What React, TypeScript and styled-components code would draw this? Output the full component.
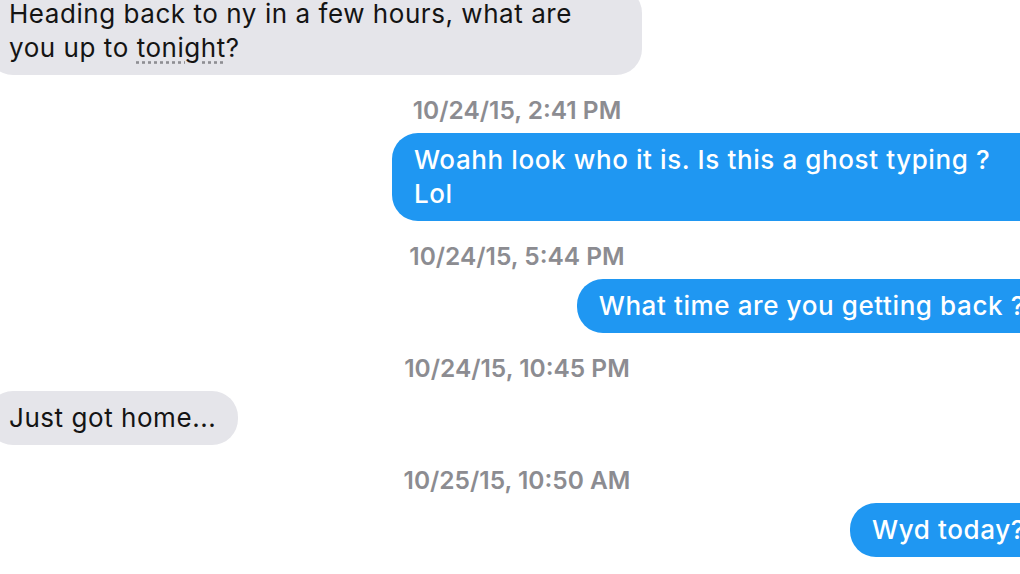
import React from "react";
import styled, { createGlobalStyle } from "styled-components";

type Message = {
   id: number;
   from: "me" | "them";
   stamp?: string;
   text: React.ReactNode;
};

const GlobalStyle = createGlobalStyle`
   html, body {
      margin: 0;
      padding: 0;
      background: #ffffff;
      overflow: hidden;
   }
   body {
      font-family: Inter, "Liberation Sans", Arial, sans-serif;
      -webkit-font-smoothing: antialiased;
   }
`;

const Thread = styled.div`
   display: flex;
   flex-direction: column;
   width: 1060px;
   margin-left: -13px;
   margin-top: -13px;
`;

const Stamp = styled.div`
   align-self: center;
   margin: 20px 0 8px;
   font-size: 24.5px;
   line-height: 30px;
   font-weight: 600;
   color: #8c8c91;
   white-space: nowrap;
`;

const Bubble = styled.div<{ $from: "me" | "them" }>`
   align-self: ${({ $from }) => ($from === "me" ? "flex-end" : "flex-start")};
   max-width: 655px;
   box-sizing: border-box;
   padding: 10px 22px;
   border-radius: 26px;
   font-size: 26px;
   line-height: 34px;
   font-weight: ${({ $from }) => ($from === "me" ? 500 : 400)};
   letter-spacing: ${({ $from }) => ($from === "me" ? "0.6px" : "0.55px")};
   background: ${({ $from }) => ($from === "me" ? "#1f97f2" : "#e5e5ea")};
   color: ${({ $from }) => ($from === "me" ? "#ffffff" : "#141414")};
`;

const Detected = styled.span`
   text-decoration: underline dotted #8e8e93;
   text-underline-offset: 4px;
`;

const messages: Message[] = [
   {
      id: 1,
      from: "them",
      text: (
         <>
            Heading back to ny in a few hours, what are you up to{" "}
            <Detected>tonight</Detected>?
         </>
      ),
   },
   {
      id: 2,
      from: "me",
      stamp: "10/24/15, 2:41 PM",
      text: "Woahh look who it is. Is this a ghost typing ? Lol",
   },
   {
      id: 3,
      from: "me",
      stamp: "10/24/15, 5:44 PM",
      text: "What time are you getting back ?",
   },
   {
      id: 4,
      from: "them",
      stamp: "10/24/15, 10:45 PM",
      text: "Just got home...",
   },
   {
      id: 5,
      from: "me",
      stamp: "10/25/15, 10:50 AM",
      text: "Wyd today?",
   },
];

function App() {
   return (
      <>
         <GlobalStyle />
         <Thread>
            {messages.map((m) => (
               <React.Fragment key={m.id}>
                  {m.stamp && <Stamp>{m.stamp}</Stamp>}
                  <Bubble $from={m.from}>{m.text}</Bubble>
               </React.Fragment>
            ))}
         </Thread>
      </>
   );
}

export default App;
